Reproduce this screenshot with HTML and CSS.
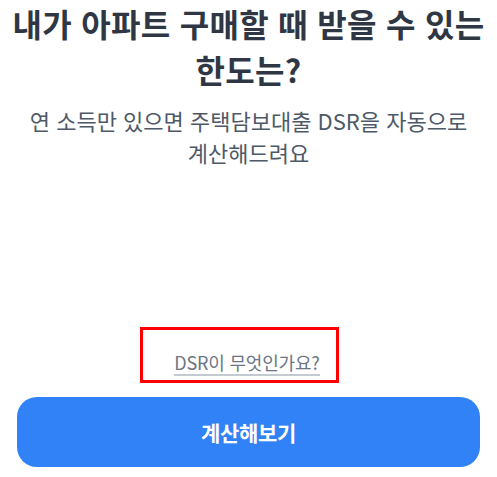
FILE: index.html
```html
<!DOCTYPE html>
<html lang="ko">
<head>
<meta charset="UTF-8">
<meta name="viewport" content="width=device-width, initial-scale=1.0">
<title>DSR 한도 계산</title>
<link rel="stylesheet" href="styles.css">
</head>
<body>

<main class="page">
    <section class="intro">
        <h1 class="title">내가 아파트 구매할 때 받을 수 있는 한도는?</h1>
        <p class="desc">연 소득만 있으면 주택담보대출 DSR을 자동으로 계산해드려요</p>
    </section>

    <div class="help">
        <!-- red box marks the link -->
        <div class="help-mark">
            <a class="help-link" href="#">DSR이 무엇인가요?</a>
        </div>
    </div>

    <div class="cta">
        <button class="cta-btn" type="button">계산해보기</button>
    </div>
</main>

</body>
</html>
```

FILE: styles.css
```css
body {
    margin: 0;
    padding: 0;
    background-color: #ffffff;
    font-family: "Noto Sans CJK KR", "Noto Sans", sans-serif;
}

.page {
    display: flex;
    flex-direction: column;
    min-height: 100vh;
    box-sizing: border-box;
    padding: 0 0 10px;
}

.intro {
    text-align: center;
    padding: 0 4px;
    word-break: keep-all;
}

.title {
    margin: 0;
    font-size: 32px;
    line-height: 46px;
    font-weight: 700;
    letter-spacing: 0.3px;
    color: #2f3744;
}

.desc {
    margin: 12px 0 0;
    font-size: 22px;
    line-height: 32px;
    letter-spacing: 0;
    color: #4e5968;
}

.help {
    margin-top: auto;
    display: flex;
    justify-content: center;
}

.help-mark {
    margin-right: 18px;
    padding: 20px 16px 4px 31px;
    border: 3px solid #ff0000;
}

.help-link {
    display: inline-block;
    font-size: 18px;
    line-height: 24px;
    letter-spacing: -0.2px;
    color: #6b7684;
    text-decoration: none;
    border-bottom: 2px solid #c4cad1;
}

.cta {
    padding: 14px 17px 0;
}

.cta-btn {
    display: block;
    width: 100%;
    height: 70px;
    border: none;
    border-radius: 20px;
    background-color: #3182f6;
    color: #ffffff;
    font-family: inherit;
    font-size: 21px;
    font-weight: 700;
    letter-spacing: -0.3px;
}
```
